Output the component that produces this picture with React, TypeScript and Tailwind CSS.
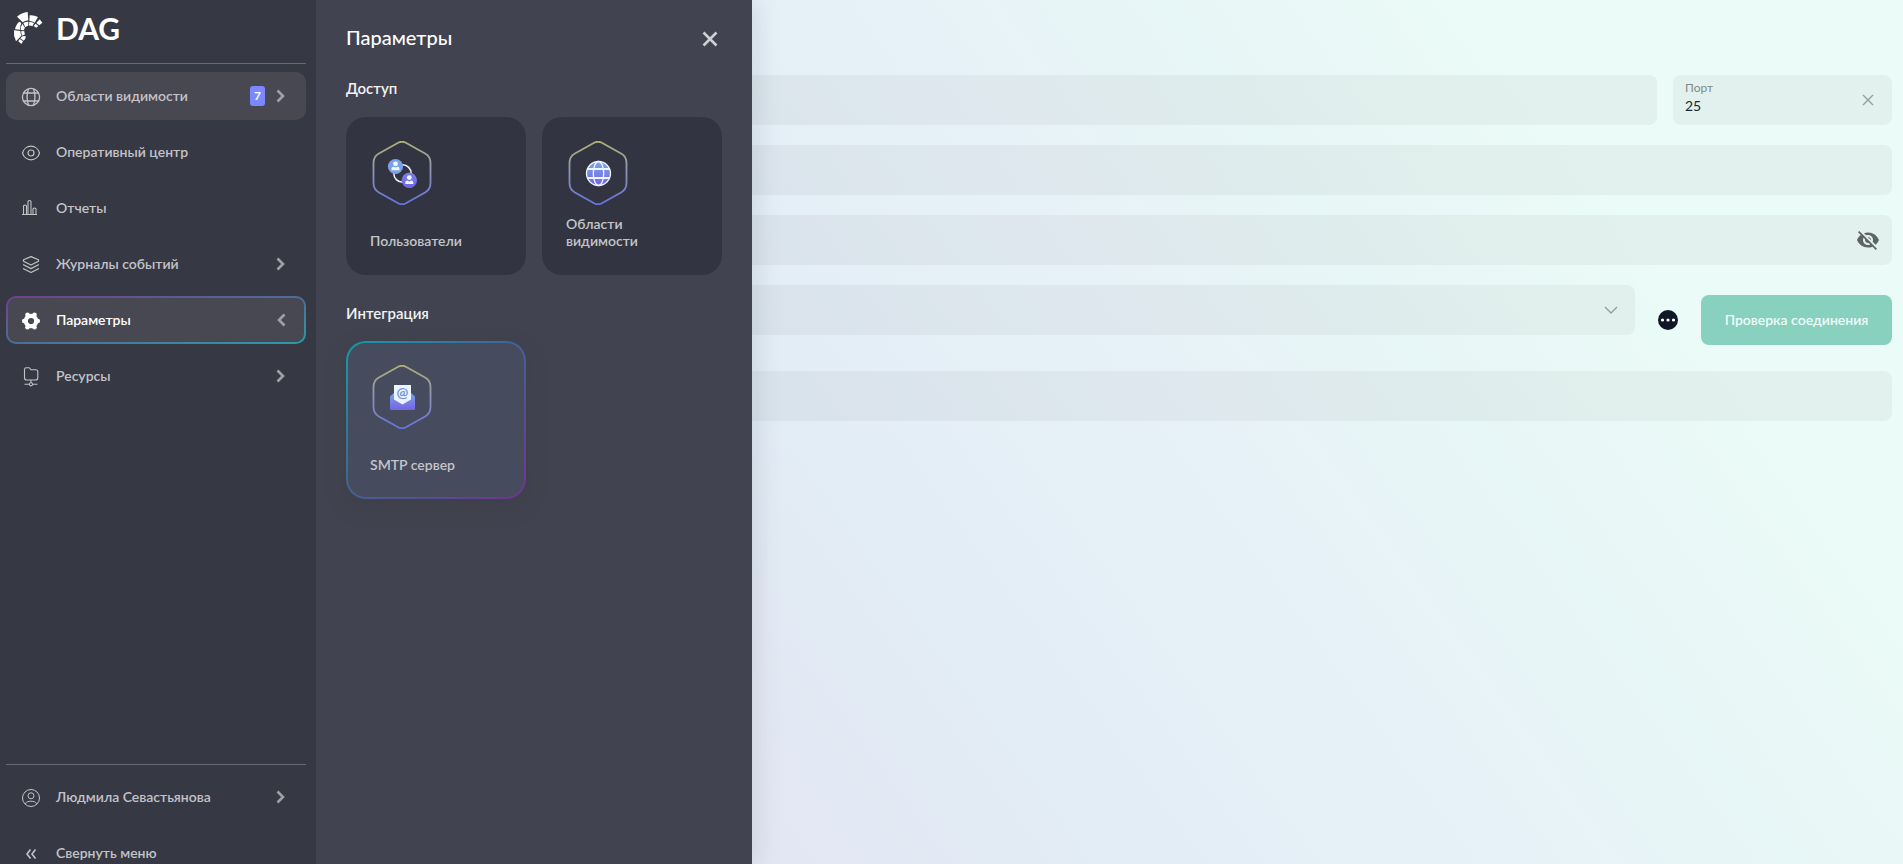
import { useId } from 'react'
import type { ReactNode } from 'react'

const Chevron = ({ left = false }: { left?: boolean }) => (
  <svg viewBox="0 0 10 14" className="h-[14px] w-[10px] shrink-0 text-[#a0a1a6]" fill="none" stroke="currentColor" strokeWidth="2.6">
    <path d={left ? 'M8.5 1.5 3 7l5.5 5.5' : 'M1.5 1.5 7 7l-5.5 5.5'} />
  </svg>
)

const Logo = () => (
  <svg viewBox="39 33 90 102" className="h-[34px] w-[30px]" fill="#fff">
    <path d="M51 50Q65 38 83 36L85 61Q75 62 68 67Z" />
    <path d="M89 46Q102 45 114 51L104 68Q97 63 88 62Z" />
    <path d="M119 58 127 68 118 76 109 69Z" />
    <path d="M107 71 115 78 109 83 101 78Z" />
    <path d="M88 65Q96 65 102 70L97 79Q92 76 87 77Z" />
    <path d="M70 69Q77 65 85 65V77Q80 78 76 82Z" />
    <path d="M58 65 64 69Q60 78 60 89L45 88Q47 74 58 65Z" />
    <path d="M67 71 75 83Q72 87 72 91L62 90Q62 79 67 71Z" />
    <path d="M42 91 61 93Q61 100 64 107L48 124Q40 108 42 91Z" />
    <path d="M64 93 73 94Q73 99 75 103L66 107Q63 100 64 93Z" />
    <path d="M67 109 77 108 76 116 71 122 61 115Z" />
    <path d="M59 117 69 124 64 132 55 124Z" />
  </svg>
)

const GlobeIcon = () => (
  <svg viewBox="0 0 20 20" className="size-5" fill="none" stroke="currentColor" strokeWidth="1.3">
    <circle cx="10" cy="10" r="8.6" />
    <path d="M7.500 1.800Q4.600 10 7.500 18.200M12.500 1.800Q15.400 10 12.500 18.200M2.600 6h14.800M2.600 14h14.800" />
  </svg>
)

const EyeIcon = () => (
  <svg viewBox="0 0 20 20" className="size-5" fill="none" stroke="currentColor" strokeWidth="1.2">
    <path d="M1.500 10C2.500 6 6 3.200 10 3.200S17.500 6 18.500 10c-1 4-4.500 6.800-8.500 6.800S2.500 14 1.500 10z" />
    <circle cx="10" cy="10" r="3" />
  </svg>
)

const ChartIcon = () => (
  <svg viewBox="0 0 20 20" className="size-5" fill="none" stroke="currentColor" strokeWidth="1.1">
    <path d="M1 15.500h15M2.500 15.500V7q0-1 1.500-1t1.500 1v8.500M7 15.500V2.500q0-1 1.500-1t1.500 1v13M12 15.500v-5.500q0-1 1.500-1t1.500 1v5.500" />
  </svg>
)

const LayersIcon = () => (
  <svg viewBox="0 0 20 20" className="size-5" fill="none" stroke="currentColor" strokeWidth="1.2" strokeLinejoin="round" strokeLinecap="round">
    <path d="M10 1.600 17.500 4.800v1.400L10 10 2.500 6.200V4.800z" />
    <path d="M2.500 9.800 10 13.600l7.500-3.800M2.500 13.700l7.500 3.800 7.500-3.800" />
  </svg>
)

const GearIcon = () => (
  <svg viewBox="0 0 20 20" className="size-5" fill="currentColor">
    <circle cx="10" cy="10" r="5.2" fill="none" stroke="currentColor" strokeWidth="4.2" />
    <circle cx="3.2" cy="10" r="2.3" />
    <circle cx="16.8" cy="10" r="2.3" />
    <circle cx="6.5" cy="3.8" r="2.3" />
    <circle cx="13.5" cy="3.8" r="2.3" />
    <circle cx="6.5" cy="16.2" r="2.3" />
    <circle cx="13.5" cy="16.2" r="2.3" />
  </svg>
)

const FolderIcon = () => (
  <svg viewBox="0 0 20 20" className="size-5" fill="none" stroke="currentColor" strokeWidth="1.1">
    <path d="M3.500 2.500Q3.500.8 5.200.8h2.500q1 0 1.500.9l.6 1h5q2 0 2 2v6q0 2.300-2.300 2.300H5.800q-2.300 0-2.300-2.300z" />
    <path d="M10 13v3M3.500 17.300h4.800M11.700 17.300h4.800" />
    <circle cx="10" cy="17.300" r="1.600" />
  </svg>
)

const UserIcon = () => (
  <svg viewBox="0 0 20 20" className="size-5" fill="none" stroke="currentColor" strokeWidth="1">
    <circle cx="10" cy="10" r="8.500" />
    <circle cx="10" cy="7.800" r="3" />
    <path d="M4.200 15.800c1.200-2 3.400-2.600 5.800-2.600s4.600.6 5.800 2.600" />
  </svg>
)

const CollapseIcon = () => (
  <svg viewBox="0 0 20 20" className="size-5" fill="none" stroke="currentColor" strokeWidth="1.6">
    <path d="M9.500 5.500 6 10l3.500 4.500M14.500 5.500 11 10l3.500 4.500" />
  </svg>
)

type NavItemProps = {
  icon: ReactNode
  label: string
  badge?: number
  arrow?: 'left' | 'right'
  highlighted?: boolean
  active?: boolean
}

const NavItem = ({ icon, label, badge, arrow, highlighted, active }: NavItemProps) => {
  const look = active
    ? 'text-white [background:linear-gradient(#474852,#474852)_padding-box,linear-gradient(to_bottom_right,#723f8c,#2a9ba6)_border-box]'
    : highlighted
      ? 'bg-[#474852] text-[#c3c3c7]'
      : 'text-[#c3c3c7]'

  return (
    <li>
      <button type="button" className={`flex h-12 w-full items-center rounded-[10px] border-2 border-transparent pl-[13px] pr-[18px] text-left ${look}`}>
        <span className="mt-[2px] shrink-0">{icon}</span>
        <span className="ml-[15px] grow pb-px text-sm leading-5 font-semibold">{label}</span>
        {badge && (
          <span className="mr-[11px] flex h-5 w-[15px] items-center justify-center rounded-[3px] bg-[#7b88ff] text-xs font-bold text-white">
            {badge}
          </span>
        )}
        {arrow && <Chevron left={arrow === 'left'} />}
      </button>
    </li>
  )
}

const Sidebar = () => (
  <nav className="relative z-10 flex h-full w-[316px] flex-col overflow-hidden bg-[#363844] pl-[6px] pr-[10px]">
    <div className="flex h-[63px] shrink-0 items-start gap-[13px] pl-[7px] pt-[11px]">
      <Logo />
      <span className="text-[30px] leading-[34px] font-bold text-white">DAG</span>
    </div>
    <ul className="flex grow flex-col gap-2 border-t border-[#686974] pt-2">
      <NavItem icon={<GlobeIcon />} label="Области видимости" badge={7} arrow="right" highlighted />
      <NavItem icon={<EyeIcon />} label="Оперативный центр" />
      <NavItem icon={<ChartIcon />} label="Отчеты" />
      <NavItem icon={<LayersIcon />} label="Журналы событий" arrow="right" />
      <NavItem icon={<GearIcon />} label="Параметры" arrow="left" active />
      <NavItem icon={<FolderIcon />} label="Ресурсы" arrow="right" />
    </ul>
    <ul className="-mb-[13px] flex shrink-0 flex-col gap-2 border-t border-[#686974] pt-2">
      <NavItem icon={<UserIcon />} label="Людмила Севастьянова" arrow="right" />
      <NavItem icon={<CollapseIcon />} label="Свернуть меню" />
    </ul>
  </nav>
)

const Hexagon = ({ children }: { children: (gradient: string) => ReactNode }) => {
  const id = useId()

  return (
    <svg viewBox="0 0 64 64" className="size-16" fill="none">
      <defs>
        <linearGradient id={`${id}line`} x1="32" y1="0" x2="32" y2="64" gradientUnits="userSpaceOnUse">
          <stop stopColor="#b0b070" />
          <stop offset=".45" stopColor="#9195b4" />
          <stop offset="1" stopColor="#6673e0" />
        </linearGradient>
        <linearGradient id={`${id}fill`} x1="0" y1="0" x2="0" y2="1">
          <stop stopColor="#7ba6ea" />
          <stop offset="1" stopColor="#7564e4" />
        </linearGradient>
      </defs>
      <path
        d="M28.600 1.500Q32 0 35.400 1.500L55.500 12.800Q60.500 15.800 60.500 22V42Q60.500 48.200 55.500 51.200L35.400 62.500Q32 64 28.600 62.500L8.500 51.200Q3.500 48.200 3.500 42V22Q3.500 15.800 8.500 12.800Z"
        stroke={`url(#${id}line)`}
        strokeWidth="1.8"
      />
      {children(`url(#${id}fill)`)}
    </svg>
  )
}

const UsersGlyph = ({ fill }: { fill: string }) => (
  <>
    <circle cx="32.500" cy="32.500" r="8.700" stroke="#f0f4ff" strokeWidth="1.500" />
    <circle cx="25.500" cy="25.500" r="7.600" fill="#7ba0e8" />
    <circle cx="39.300" cy="39.300" r="7.600" fill={fill} />
    <circle cx="39.300" cy="39.300" r="7.600" fill="#7466e4" fillOpacity=".6" />
    <g fill="#f0f7ff">
      <circle cx="25.500" cy="22.800" r="2.400" />
      <path d="M21.500 29.300v-1.500q0-2 2-2l2 .8 2-.8q2 0 2 2v1.500z" />
      <circle cx="39.300" cy="36.600" r="2.400" />
      <path d="M35.300 43.100v-1.500q0-2 2-2l2 .8 2-.8q2 0 2 2v1.500z" />
    </g>
  </>
)

const GlobeGlyph = ({ fill }: { fill: string }) => (
  <>
    <circle cx="32.500" cy="32.500" r="12" fill={fill} />
    <g stroke="#eef6ff" strokeWidth="1.300">
      <circle cx="32.500" cy="32.500" r="12" />
      <ellipse cx="32.500" cy="32.500" rx="5.200" ry="12" />
      <path d="M21.500 28h22M21.500 37h22" strokeWidth="1.800" />
    </g>
  </>
)

const MailGlyph = ({ fill }: { fill: string }) => (
  <>
    <path d="M20 31.500 25 27h15l5 4.500V44q0 1-1 1H21q-1 0-1-1z" fill={fill} />
    <path d="M24 20h17v14.500l-8.500 5-8.500-5z" fill="#eaf5ff" />
    <text x="32.500" y="33" textAnchor="middle" fontSize="14" fontWeight="700" fill="#7394dc">
      @
    </text>
  </>
)

const Tile = ({ label, icon, active = false }: { label: string; icon: ReactNode; active?: boolean }) => (
  <button
    type="button"
    className={`flex h-[158px] w-[180px] flex-col items-start rounded-[20px] border-2 border-transparent pb-6 pl-[22px] pr-8 pt-[22px] text-left text-sm leading-[17px] font-semibold text-[#c4c5ca] ${
      active
        ? 'shadow-[0_8px_20px_rgba(56,58,60,0.35)] [background:linear-gradient(#464b5e,#464b5e)_padding-box,linear-gradient(to_bottom_right,#159ba3,#426295_50%,#713391)_border-box]'
        : 'bg-[#323541]'
    }`}
  >
    {icon}
    <span className="mt-auto">{label}</span>
  </button>
)

const SettingsPanel = () => (
  <aside className="absolute inset-y-0 left-full w-[436px] bg-[#414350] px-[30px] pt-6 shadow-[4px_0_24px_rgba(60,70,90,0.14)]">
    <header className="flex h-[30px] items-center justify-between pr-1">
      <h2 className="pb-[5px] text-xl leading-7 font-medium text-white">Параметры</h2>
      <button type="button" aria-label="Закрыть" className="text-[#cfd0d3]">
        <svg viewBox="0 0 16 16" className="size-4" stroke="currentColor" strokeWidth="2.6">
          <path d="m1.500 1.500 13 13m0-13-13 13" />
        </svg>
      </button>
    </header>
    <h3 className="mt-6 text-[15px] leading-5 font-semibold text-[#f2f2f3]">Доступ</h3>
    <div className="mt-[19px] flex gap-4">
      <Tile label="Пользователи" icon={<Hexagon>{(fill) => <UsersGlyph fill={fill} />}</Hexagon>} />
      <Tile label="Области видимости" icon={<Hexagon>{(fill) => <GlobeGlyph fill={fill} />}</Hexagon>} />
    </div>
    <h3 className="mt-7 text-[15px] leading-5 font-semibold text-[#f2f2f3]">Интеграция</h3>
    <div className="mt-[18px] flex gap-4">
      <Tile active label="SMTP сервер" icon={<Hexagon>{(fill) => <MailGlyph fill={fill} />}</Hexagon>} />
    </div>
  </aside>
)

const Field = ({ label, type = 'text' }: { label: string; type?: string }) => (
  <input type={type} aria-label={label} className="h-[50px] w-full min-w-0 rounded-lg bg-[#323541]/5 px-3 outline-none" />
)

const ServerForm = () => (
  <form className="flex min-w-0 grow flex-col gap-5 pl-4 pr-[11px] pt-[75px]">
    <div className="flex gap-4">
      <Field label="Сервер" />
      <div className="flex h-[50px] w-[219px] shrink-0 items-center rounded-lg bg-[#323541]/5 pl-3 pr-[18px]">
        <div className="flex min-w-0 grow flex-col pb-1">
          <label htmlFor="port" className="text-xs leading-4 text-[#7f8a88]">
            Порт
          </label>
          <input id="port" defaultValue="25" className="h-5 w-full bg-transparent text-sm leading-5 text-[#23272b] outline-none" />
        </div>
        <button type="button" aria-label="Очистить" className="text-[#929c9b]">
          <svg viewBox="0 0 12 12" className="size-3" stroke="currentColor" strokeWidth="1.3">
            <path d="m1 1 10 10m0-10L1 11" />
          </svg>
        </button>
      </div>
    </div>
    <Field label="Логин" />
    <div className="flex h-[50px] items-center rounded-lg bg-[#323541]/5 pr-3">
      <input type="password" aria-label="Пароль" className="h-full min-w-0 grow px-3 outline-none" />
      <button type="button" aria-label="Показать пароль" className="text-[#5d6666]">
        <svg viewBox="0 0 24 24" className="size-6" fill="currentColor">
          <path d="M12 7c2.760 0 5 2.240 5 5 0 .65-.13 1.260-.36 1.830l2.920 2.920c1.510-1.260 2.700-2.890 3.430-4.750-1.730-4.390-6-7.500-11-7.500-1.400 0-2.740.25-3.980.7l2.160 2.160C10.740 7.130 11.350 7 12 7zM2 4.270l2.280 2.280.46.46C3.080 8.300 1.780 10.020 1 12c1.730 4.390 6 7.500 11 7.500 1.550 0 3.030-.3 4.380-.84l.42.42L19.730 22 21 20.730 3.270 3 2 4.270zM7.530 9.800l1.550 1.550c-.05.21-.08.43-.08.65 0 1.660 1.340 3 3 3 .22 0 .44-.03.65-.08l1.550 1.550c-.67.33-1.410.53-2.200.53-2.760 0-5-2.240-5-5 0-.79.2-1.530.53-2.200zm4.310-.78 3.150 3.150.02-.16c0-1.660-1.340-3-3-3l-.17.01z" />
        </svg>
      </button>
    </div>
    <div className="flex items-start">
      <div className="relative min-w-0 grow">
        <select aria-label="Шифрование" className="block h-[50px] w-full appearance-none rounded-lg bg-[#323541]/5 px-3 outline-none" />
        <svg viewBox="0 0 14 8" className="pointer-events-none absolute right-[17px] top-[21px] h-2 w-[14px] text-[#929c9b]" fill="none" stroke="currentColor" strokeWidth="1.3">
          <path d="m1 1 6 6 6-6" />
        </svg>
      </div>
      <button type="button" aria-label="Ещё" className="ml-[23px] mt-[25px] shrink-0">
        <svg viewBox="0 0 20 20" className="size-5">
          <circle cx="10" cy="10" r="10" fill="#101828" />
          <path d="M4.500 10h.01M10 10h.01M15.500 10h.01" stroke="#fff" strokeWidth="3.2" strokeLinecap="round" />
        </svg>
      </button>
      <button type="button" className="ml-[23px] mt-[10px] h-[50px] w-[191px] shrink-0 rounded-lg bg-[#88d1be] pb-px text-sm font-semibold text-[#f0fbf8]">
        Проверка соединения
      </button>
    </div>
    <div className="mt-[6px]">
      <Field label="Отправитель" />
    </div>
  </form>
)

export default function App() {
  return (
    <div className="flex h-screen overflow-hidden bg-[linear-gradient(54deg,#e0e4f1_20%,#e2e7f3_32%,#e2ecf5_43%,#e7f2f8_61%,#e7f5f6_68%,#ebfbf7_83%)] font-[Lato,'Noto_Sans',sans-serif]">
      <div className="relative z-10 shrink-0">
        <Sidebar />
        <SettingsPanel />
      </div>
      <ServerForm />
    </div>
  )
}
